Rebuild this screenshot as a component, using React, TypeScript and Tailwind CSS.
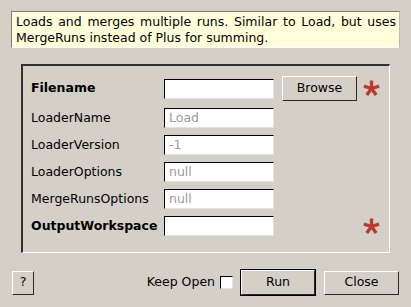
import React from "react";

const font = { fontFamily: '"DejaVu Sans", Verdana, sans-serif' };

function Star() {
  const c = 8.5;
  const r = 8;
  const angles = [-90, -18, 54, 126, 198];
  return (
    <svg width="17" height="17" viewBox="0 0 17 17" className="shrink-0">
      {angles.map((a) => {
        const rad = (a * Math.PI) / 180;
        return (
          <line
            key={a}
            x1={c}
            y1={c}
            x2={c + r * Math.cos(rad)}
            y2={c + r * Math.sin(rad)}
            stroke="#b83b2e"
            strokeWidth="3.4"
          />
        );
      })}
    </svg>
  );
}

function Field({ value }: { value?: string }) {
  return (
    <div className="w-[110px] h-[20px] bg-white border-t border-l border-t-black border-l-black border-b border-r border-b-[#e4e2dd] border-r-[#e4e2dd] flex items-center pl-[4px] text-[12.5px] text-[#9a9a9a] leading-none shrink-0">
      {value}
    </div>
  );
}

function RaisedButton({
  label,
  className,
}: {
  label: string;
  className: string;
}) {
  return (
    <div
      className={
        "flex items-center justify-center bg-[#d4d0c8] border-t border-l border-t-white border-l-white border-b border-r border-b-[#2a2a2a] border-r-[#2a2a2a] text-[12.5px] text-black leading-none shrink-0 " +
        className
      }
    >
      {label}
    </div>
  );
}

function Row({
  label,
  bold,
  value,
  browse,
  star,
  tall,
}: {
  label: string;
  bold?: boolean;
  value?: string;
  browse?: boolean;
  star?: boolean;
  tall?: boolean;
}) {
  return (
    <div className={"flex items-center " + (tall ? "h-[25px]" : "h-[20px]")}>
      <div
        className={
          "w-[133px] shrink-0 text-[12.5px] text-black leading-none " +
          (bold ? "font-bold" : "")
        }
      >
        {label}
      </div>
      <Field value={value} />
      {browse ? (
        <RaisedButton label="Browse" className="ml-[8px] w-[75px] h-[25px]" />
      ) : (
        <div className="ml-[8px] w-[75px] shrink-0" />
      )}
      <div className="ml-[6px] w-[17px] flex items-center justify-center">
        {star ? <Star /> : null}
      </div>
    </div>
  );
}

export default function App() {
  return (
    <div
      className="w-[411px] h-[307px] bg-[#d4d0c8] flex flex-col overflow-hidden"
      style={font}
    >
      <div className="mt-[11px] ml-[11px] w-[389px] h-[37px] bg-[#ffffdc] border-t border-l border-t-[#7d7b77] border-l-[#7d7b77] border-b border-r border-b-white border-r-[#bdbab3] pl-[4px] pr-[3px] pt-[2px] text-[12.5px] leading-[16px] text-black text-justify">
        Loads and merges multiple runs. Similar to Load, but uses MergeRuns
        instead of Plus for summing.
      </div>

      <div className="mt-[16px] ml-[21px] w-[369px] h-[189px] border-t-2 border-l-2 border-t-[#303030] border-l-[#303030] border-b border-r border-b-white border-r-white pt-[10px] pl-[8px] flex flex-col gap-[7px]">
        <Row label="Filename" bold browse star tall />
        <Row label="LoaderName" value="Load" />
        <Row label="LoaderVersion" value="-1" />
        <Row label="LoaderOptions" value="null" />
        <Row label="MergeRunsOptions" value="null" />
        <Row label="OutputWorkspace" bold star />
      </div>

      <div className="mt-[16px] h-[27px] ml-[12px] mr-[12px] flex items-center">
        <RaisedButton label="?" className="w-[22px] h-[24px] text-[#444]" />
        <div className="flex-1" />
        <div className="text-[12.5px] text-black leading-none">Keep Open</div>
        <div className="ml-[5px] w-[13px] h-[13px] bg-white border-t border-l border-t-black border-l-black border-b border-r border-b-[#e4e2dd] border-r-[#e4e2dd]" />
        <div className="ml-[7px] w-[76px] h-[27px] border border-black flex">
          <RaisedButton label="Run" className="w-full h-full" />
        </div>
        <RaisedButton label="Close" className="ml-[8px] w-[75px] h-[24px]" />
      </div>
    </div>
  );
}
